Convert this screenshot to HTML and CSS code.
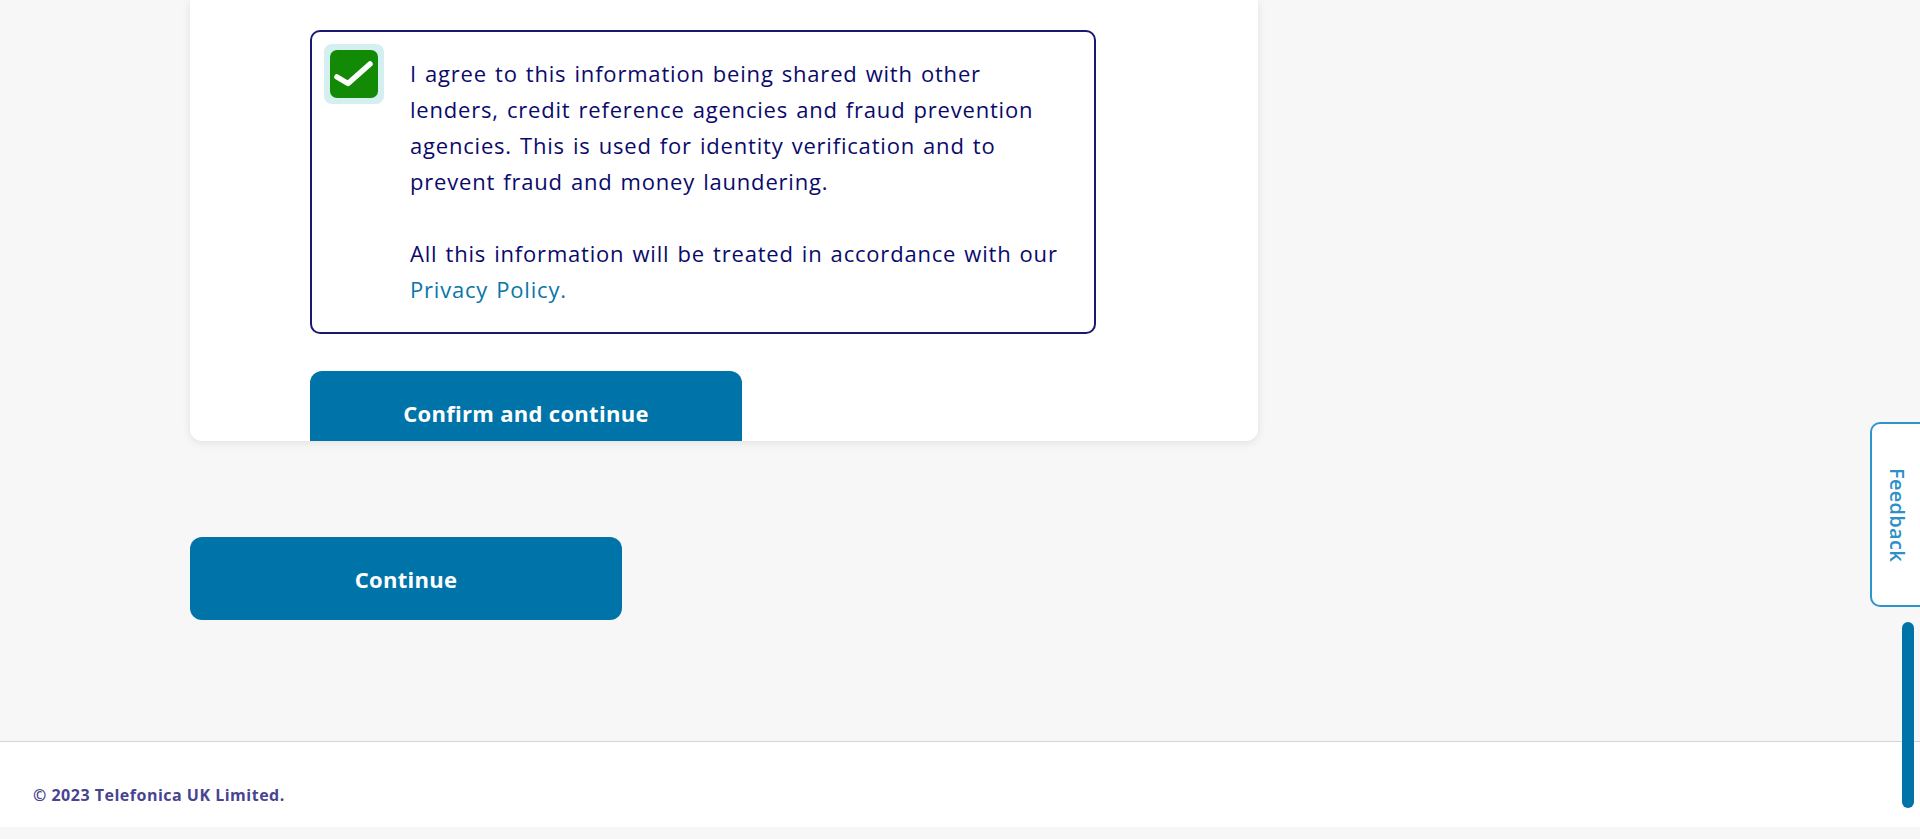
FILE: index.html
```html
<!DOCTYPE html>
<html lang="en">
<head>
<meta charset="utf-8">
<title>Confirm details</title>
<link rel="stylesheet" href="styles.css">
</head>
<body>
<main class="page">
  <section class="card">
    <div class="consent">
      <span class="checkbox" aria-checked="true" role="checkbox">
        <span class="checkbox-inner">
          <svg width="48" height="48" viewBox="0 0 48 48" aria-hidden="true">
            <path d="M7 27 L18 33.5 L40 14" fill="none" stroke="#fff" stroke-width="5.5" stroke-linecap="round" stroke-linejoin="round"/>
          </svg>
        </span>
      </span>
      <div class="consent-text">
        <p>I agree to this information being shared with other<br>lenders, credit reference agencies and fraud prevention<br>agencies. This is used for identity verification and to<br>prevent fraud and money laundering.</p>
        <p>All this information will be treated in accordance with our<br><a href="#" class="link">Privacy Policy.</a></p>
      </div>
    </div>
    <button class="btn btn-confirm" type="button">Confirm and continue</button>
  </section>
  <button class="btn btn-continue" type="button">Continue</button>
</main>
<footer class="footer">
  <p class="copyright">© 2023 Telefonica UK Limited.</p>
</footer>
<div class="footer-gap"></div>
<button class="feedback" type="button"><span class="feedback-label">Feedback</span></button>
<div class="scroll-thumb"></div>
</body>
</html>
```

FILE: styles.css
```css
* { box-sizing: border-box; }
html, body { margin: 0; padding: 0; }
body {
  background: #f7f7f7;
  font-family: "Open Sans", Lato, sans-serif;
  color: #0b0a6b;
  overflow: hidden;
  height: 839px;
}
.page {
  padding-left: 190px;
  display: flex;
  flex-direction: column;
  align-items: flex-start;
}
.card {
  width: 1068px;
  height: 441px;
  background: #fff;
  border-radius: 0 0 12px 12px;
  box-shadow: 0 2px 10px rgba(0,0,0,0.09);
  padding: 30px 0 0 120px;
  overflow: hidden;
  display: flex;
  flex-direction: column;
  align-items: flex-start;
}
.consent {
  flex: 0 0 304px;
  width: 786px;
  height: 304px;
  border: 2px solid #1a1870;
  border-radius: 10px;
  padding: 12px 12px 0 12px;
  display: flex;
  gap: 26px;
}
.checkbox {
  flex: 0 0 60px;
  width: 60px;
  height: 60px;
  background: #d3efef;
  border-radius: 8px;
  display: flex;
  align-items: center;
  justify-content: center;
}
.checkbox-inner {
  width: 48px;
  height: 48px;
  background: #128a06;
  border-radius: 7px;
  display: block;
}
.checkbox-inner svg { display: block; }
.consent-text {
  padding-top: 11px;
  font-size: 22px;
  letter-spacing: 0.8px;
  word-spacing: 1.6px;
  line-height: 36px;
  white-space: nowrap;
}
.consent-text p { margin: 0 0 36px 0; }
.consent-text p:last-child { margin-bottom: 0; }
.link { color: #0a76aa; text-decoration: none; }
.btn {
  font-family: "Open Sans", Lato, sans-serif;
  font-weight: 700;
  font-size: 22px;
  letter-spacing: 0.3px;
  color: #fff;
  background: #0074a8;
  border: 0;
  border-radius: 12px;
  width: 432px;
  height: 84px;
  padding: 0;
  cursor: pointer;
}
.btn-confirm { margin-top: 37px; flex: 0 0 84px; }
.btn-continue { margin-top: 96px; height: 83px; }
.footer {
  margin-top: 121px;
  background: #fff;
  border-top: 1px solid #d4d4d4;
  height: 86px;
  padding: 0 33px;
  display: flex;
  align-items: flex-end;
}
.copyright {
  margin: 0 0 21px 0;
  font-size: 16px;
  font-weight: 700;
  letter-spacing: 0.5px;
  color: #48448f;
}
.footer-gap { height: 12px; }
.feedback {
  position: fixed;
  left: 1870px;
  top: 422px;
  width: 52px;
  height: 185px;
  background: #fff;
  border: 2px solid #2e94cb;
  border-right: 0;
  border-radius: 10px 0 0 10px;
  color: #2b90c6;
  font-family: "Open Sans", Lato, sans-serif;
  font-size: 20px;
  font-weight: 600;
  letter-spacing: 0.3px;
  padding: 44px 0 0 0;
  display: flex;
  justify-content: center;
  align-items: flex-start;
}
.feedback-label {
  writing-mode: vertical-rl;
  line-height: 24px;
}
.scroll-thumb {
  position: fixed;
  left: 1902px;
  top: 622px;
  width: 12px;
  height: 186px;
  background: #0074a8;
  border-radius: 6px;
}
```
